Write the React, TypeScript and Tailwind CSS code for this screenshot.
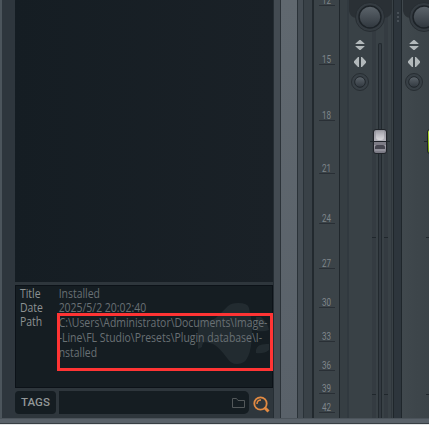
import React from "react";

const marks = [
  { label: "12", height: 6 },
  { label: "15", height: 59 },
  { label: "18", height: 56 },
  { label: "21", height: 53 },
  { label: "24", height: 50 },
  { label: "27", height: 45 },
  { label: "30", height: 39 },
  { label: "33", height: 34 },
  { label: "36", height: 29 },
  { label: "39", height: 23 },
  { label: "42", height: 19 },
];

function Scale() {
  return (
    <div className="flex h-[418px] w-[25px] shrink-0 flex-col items-center overflow-hidden bg-[#3b4348]">
      {marks.map((m) => (
        <div
          key={m.label}
          className="flex w-4 shrink-0 items-end justify-center border-b border-[#292f35]"
          style={{ height: m.height }}
        >
          <span className="scale-x-[0.7] font-['Roboto',sans-serif] text-[11.5px] leading-[9px] text-[#7f868b]">
            {m.label}
          </span>
        </div>
      ))}
    </div>
  );
}

function Fader({ green = false }: { green?: boolean }) {
  const body = green
    ? "left-[25px] from-[#b8df3c] via-[#90bd18] to-[#62850e]"
    : "left-[33px] from-[#94949d] via-[#b6b5bd] to-[#777681]";
  return (
    <div
      className={`absolute top-[129px] z-10 h-[25px] w-[14px] rounded-[3px] border border-[#202429] bg-linear-to-b ${body}`}
    >
      {!green && (
        <>
          <div className="mx-[2px] mt-[1px] h-[9px] rounded-b-[3px] bg-linear-to-b from-white/10 to-white/50" />
          <div className="mt-px h-px bg-[#20242a]" />
          <div className="h-[3px] bg-[#7d7c86]" />
          <div className="mx-[1px] h-[4px] rounded-t-[2px] bg-[#464650]" />
          <div className="mx-[1px] h-[2px] bg-[#92919b]" />
        </>
      )}
    </div>
  );
}

function Controls() {
  return (
    <svg className="shrink-0" width="44" height="94" viewBox="0 0 44 94">
      <defs>
        <linearGradient id="knob" x1="0" y1="0" x2="0" y2="1">
          <stop offset="0" stopColor="#5d656c" />
          <stop offset="1" stopColor="#30373e" />
        </linearGradient>
      </defs>
      <path d="M0 0H43V11Q42 17 35 18H7Q1 17 0 11Z" fill="#2a3035" />
      <circle cx="21" cy="17" r="14.5" fill="#343b41" stroke="#272d32" />
      <circle cx="21" cy="17" r="11" fill="url(#knob)" stroke="#1d2328" strokeWidth="1.5" />
      <path d="M6.5 44V43.5L10.5 40H11.5L15.5 43.5V44ZM6.5 46V46.5L10.5 50H11.5L15.5 46.5V46Z" fill="#b3b9bb" />
      <path d="M10 57V67H9L5 62.8V61.2L9 57ZM12 57V67H13L17 62.8V61.2L13 57Z" fill="#b3b9bb" />
      <circle cx="11" cy="82" r="8.5" fill="#384046" stroke="#272d32" />
      <circle cx="11" cy="82" r="5.3" fill="url(#knob)" stroke="#20262b" />
    </svg>
  );
}

function Notches() {
  return (
    <>
      <div className="absolute left-[32px] top-[237px] flex gap-2">
        <i className="h-px w-1 bg-[#20272c]" />
        <i className="h-px w-1 bg-[#20272c]" />
      </div>
      <div className="absolute left-[32px] top-[394px] flex gap-2">
        <i className="h-px w-1 bg-[#20272c]" />
        <i className="h-px w-1 bg-[#20272c]" />
      </div>
    </>
  );
}

function MixerStrip() {
  return (
    <div className="relative flex h-[418px] w-[53px] shrink-0 overflow-hidden bg-[#394146]">
      <div className="w-[7px] shrink-0 bg-[#363e43]" />
      <div className="w-[2px] shrink-0 bg-[#31393f]" />
      <div className="w-[23px] shrink-0" />
      <div className="w-1 shrink-0 bg-[#343b41]" />
      <div className="ml-[2px] mt-[43px] w-1 shrink-0 rounded-t-sm border-x border-t border-[#22292e] bg-[#323940]" />
      <div className="ml-[2px] w-1 shrink-0 bg-[#343b41]" />
      <div className="ml-[3px] w-px shrink-0 bg-[#30373d]" />
      <div className="absolute left-[9px] top-0">
        <Controls />
      </div>
      <div className="absolute left-[30px] top-[141px] h-px w-[20px] bg-[#20272c]" />
      <Fader />
      <Notches />
    </div>
  );
}

function NextStrip() {
  return (
    <div className="relative h-[418px] w-[27px] shrink-0 overflow-hidden bg-linear-to-r from-[#40484d] to-[#3b4348]">
      <div className="ml-px">
        <Controls />
      </div>
      <div className="absolute right-0 top-[141px] h-px w-[5px] bg-[#20272c]" />
      <Fader green />
      <div className="absolute right-0 top-[237px] h-px w-[3px] bg-[#20272c]" />
      <div className="absolute right-0 top-[394px] h-px w-[3px] bg-[#20272c]" />
    </div>
  );
}

function Info() {
  return (
    <div className="relative mt-[3px] h-[103px] border border-[#0c1218] bg-[#151d22] font-['Open_Sans',sans-serif] text-[12px] leading-[14px]">
      <svg className="absolute left-[181px] top-[17px]" width="74" height="62" viewBox="0 0 74 62">
        <path
          d="M1 15Q2 18 7 18Q17 18 22 12L31 3Q34 0 41 0Q51 0 52 5Q53 10 54 15Q56 29 54 43Q52 55 47 59Q44 61 40 61Q34 61 30 55Q22 44 16 41Q10 39 8 39Q5 40 5 44L1 46ZM59 14H64Q71 20 72 27Q67 29 60 28ZM59 47Q60 40 72 41V47Q67 51 59 50Z"
          fill="#222b30"
        />
      </svg>
      <dl className="relative grid w-[294px] origin-top-left scale-x-[0.87] grid-cols-[44.5px_1fr] pl-[4.5px] pt-[1px] text-[#8d9293]">
        <dt>Title</dt>
        <dd className="text-[#697074]">Installed</dd>
        <dt>Date</dt>
        <dd className="text-[#697074]">2025/5/2 20:02:40</dd>
        <dt>Path</dt>
        <dd className="whitespace-nowrap leading-[15px] text-[#697074]">
          C:\Users\Administrator\Documents\Image-
          <br />
          -Line\FL Studio\Presets\Plugin database\I-
          <br />
          nstalled
        </dd>
      </dl>
      <div className="absolute left-[41px] top-[27px] h-[58px] w-[216px] border-3 border-[#ff3434]" />
    </div>
  );
}

function Browser() {
  return (
    <div className="flex h-[418px] w-[258px] shrink-0 flex-col">
      <div className="h-[282px] bg-linear-to-r from-[#151d23] to-[#1a2127]" />
      <Info />
      <div className="mt-[3px] flex h-[23px] items-stretch">
        <div className="flex w-[41px] items-center justify-center rounded-[4px] bg-[#151d22] pt-px font-['Roboto',sans-serif] text-[11.5px] font-medium text-[#929798]">
          TAGS
        </div>
        <div className="ml-[3px] flex w-[190px] items-center justify-end rounded-r-[5px] bg-[#151d22] pr-1">
          <svg width="13" height="12" viewBox="0 0 13 12" fill="none" stroke="#53585a">
            <path d="M.5 10.5V1.5H4.5L6 3.5H12.5V10.5Z" />
          </svg>
        </div>
        <svg className="ml-1 mt-[5px]" width="18" height="18" viewBox="0 0 18 18" fill="none">
          <circle cx="7.5" cy="7.5" r="6.2" stroke="#e28a42" strokeWidth="1.8" />
          <path d="M4 8Q4 4 8 4" stroke="#e28a42" strokeWidth="1.5" />
          <path d="M11.5 11.5L15.5 15.5" stroke="#e28a42" strokeWidth="3" />
        </svg>
      </div>
    </div>
  );
}

export default function App() {
  return (
    <main className="flex h-[425px] w-[429px] flex-col overflow-hidden bg-[#2e363c]">
      <div className="flex h-[418px] shrink-0">
        <div className="w-[2px] shrink-0 bg-[#4c555c]" />
        <div className="w-[13px] shrink-0 bg-[#2e363d]" />
        <Browser />
        <div className="w-[1px] shrink-0 bg-[#252d33]" />
        <div className="w-[7px] shrink-0 border-r border-[#2b3238] bg-[#434b52]" />
        <div className="w-[16px] shrink-0 bg-linear-to-b from-[#60686f] to-[#596169]" />
        <div className="w-[7px] shrink-0 border-x border-[#2a3238] bg-[#454d54]" />
        <div className="w-[10px] shrink-0 border-r-2 border-[#22292e] bg-[#394147]" />
        <Scale />
        <div className="w-px shrink-0 bg-[#20272c]" />
        <MixerStrip />
        <div className="flex w-[9px] shrink-0 flex-col items-center border-x border-[#1f262b] bg-[#2d353c] pt-[12px]">
          <div className="flex flex-col gap-[2px]">
            <i className="h-[2px] w-[2px] bg-[#485057]" />
            <i className="h-[2px] w-[2px] bg-[#485057]" />
            <i className="h-[2px] w-[2px] bg-[#485057]" />
          </div>
        </div>
        <NextStrip />
      </div>
      <div className="h-[5px] shrink-0 border-t border-[#4b535a] bg-[#596169]" />
      <div className="h-px shrink-0 bg-[#373e43]" />
      <div className="h-px shrink-0 bg-[#e5e7e8]" />
    </main>
  );
}
